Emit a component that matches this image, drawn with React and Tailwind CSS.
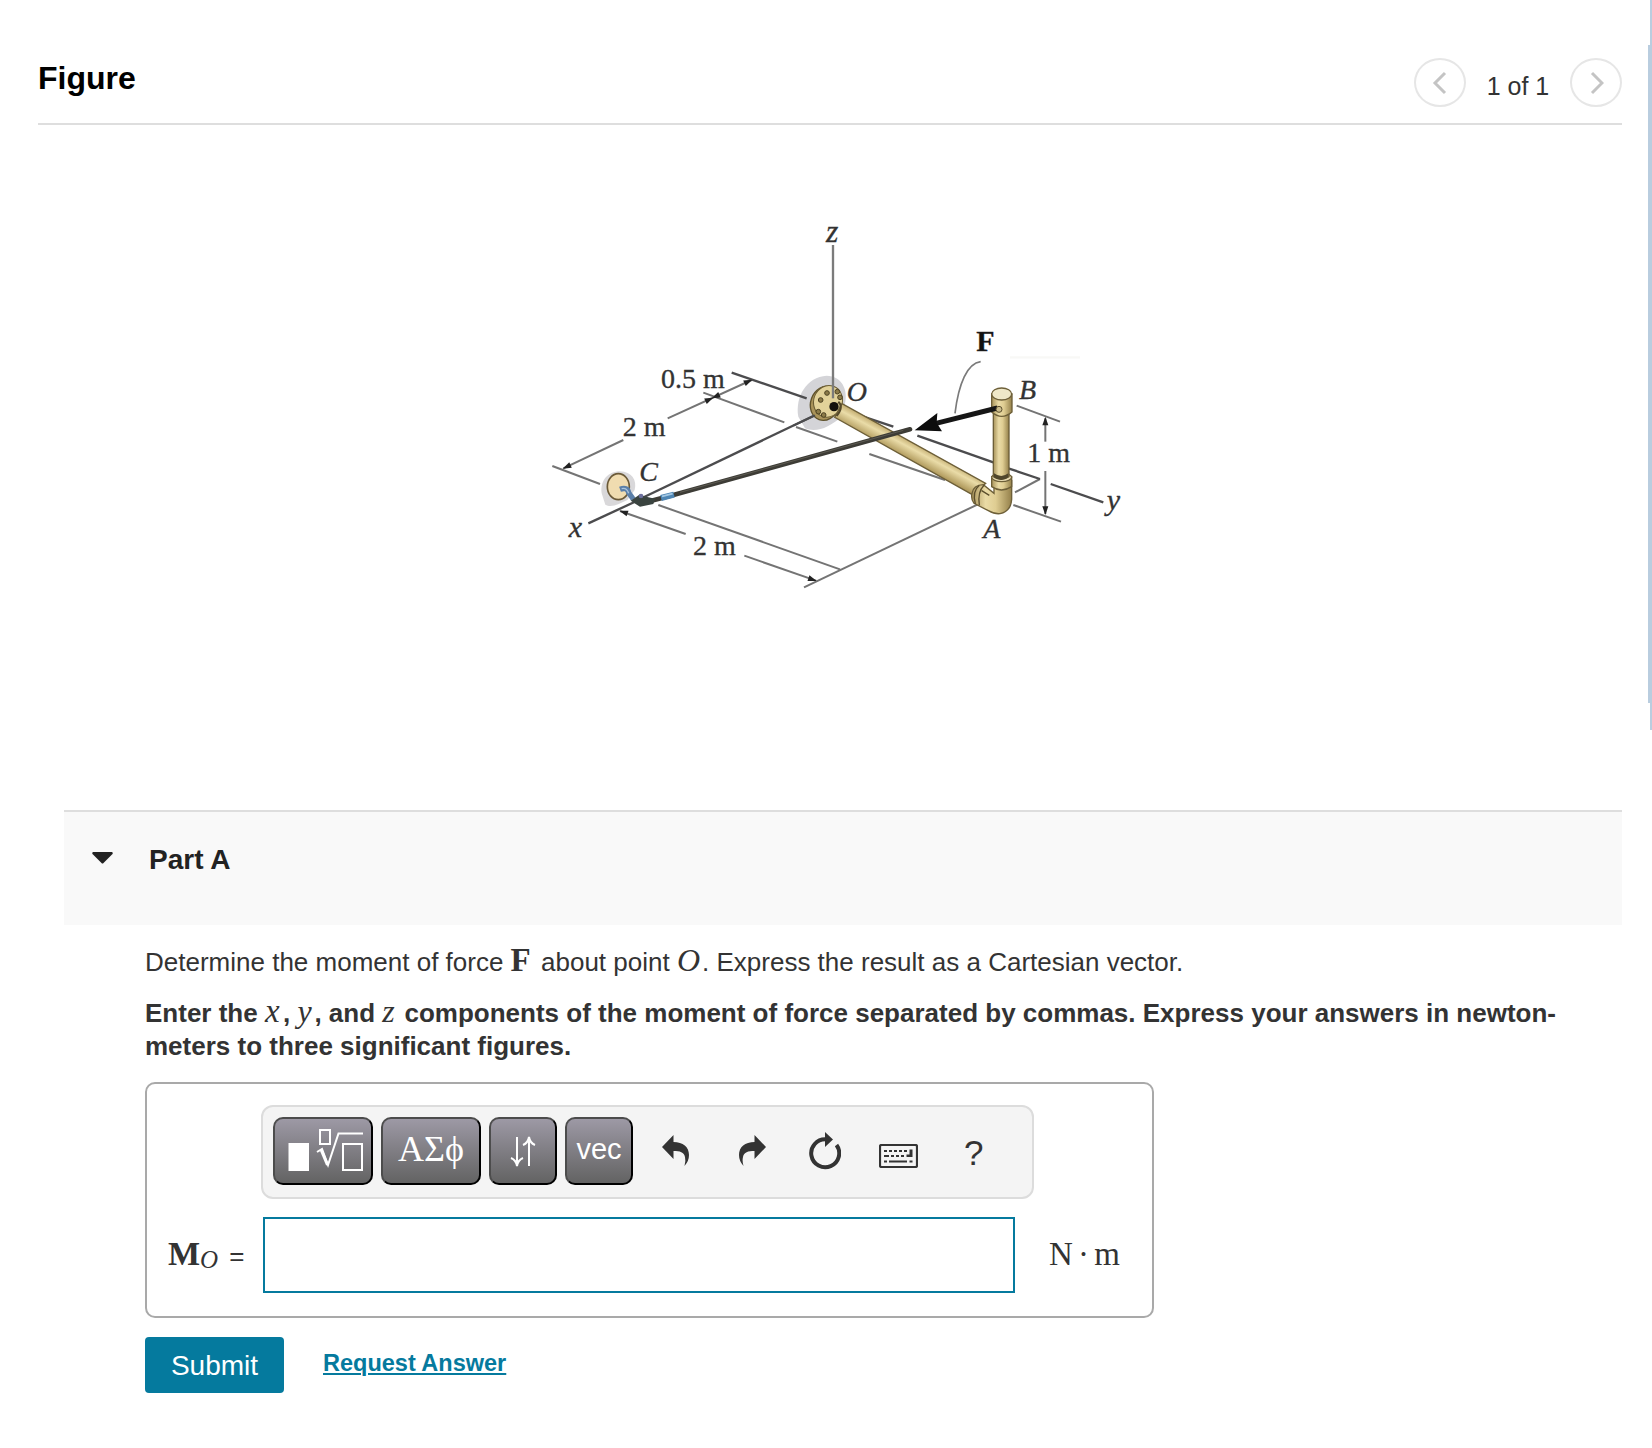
import React, { useState } from 'react';

const serif = "font-['Liberation_Serif',serif]";

const thinLines = [
  [490, 548, 733, 637],
  [768, 651, 892, 695],
  [383, 625, 635, 510],
  [250, 690, 70, 775],
  [37, 768, 180, 822],
  [240, 903, 437, 972],
  [613, 1037, 828, 1112],
  [355, 885, 900, 1078],
  [792, 1132, 1320, 880],
  [988, 732, 1215, 810],
  [1425, 847, 1500, 807],
  [1420, 885, 1563, 935],
  [1430, 587, 1560, 635],
  [1516, 625, 1516, 695],
  [1516, 783, 1516, 912],
];

const axisLines = [
  [575, 488, 800, 565],
  [145, 940, 290, 873],
  [300, 867, 820, 618],
  [970, 620, 1060, 650],
  [1132, 677, 1360, 757],
  [1405, 775, 1500, 807],
  [1532, 822, 1690, 877],
];

// tip x, tip y, direction in degrees
const arrowHeads = [
  [637, 509, -25],
  [520, 563, -25],
  [515, 565, 155],
  [68, 776, 155],
  [238, 902, 199],
  [830, 1113, 19],
  [1516, 620, -90],
  [1516, 915, 90],
];

const Diagram = () => (
  <svg className="w-[600px] h-[400px]" viewBox="0 0 1800 1200">
    <defs>
      <linearGradient id="pipeV" x1="0" x2="1" y1="0" y2="0">
        <stop offset="0" stopColor="#a8935a" />
        <stop offset="0.35" stopColor="#eadba6" />
        <stop offset="0.6" stopColor="#dfcd92" />
        <stop offset="1" stopColor="#94804a" />
      </linearGradient>
      <linearGradient id="pipeH" gradientUnits="userSpaceOnUse" x1="1105" y1="692" x2="1083" y2="733">
        <stop offset="0" stopColor="#c9b479" />
        <stop offset="0.35" stopColor="#eadca8" />
        <stop offset="1" stopColor="#b39d60" />
      </linearGradient>
    </defs>

    <path d="M775 620C765 560 800 500 860 497C905 497 925 540 915 580L905 620C870 650 830 670 795 655Z" fill="#d4d4d8" />
    <path d="M185 850C180 810 205 784 240 784C275 786 292 810 284 840L262 870C240 880 215 895 196 884Z" fill="#d9d8da" />
    <path d="M1410 442H1620" stroke="#f8f8f6" strokeWidth="7" />

    <g stroke="#747474" strokeWidth="6">
      {thinLines.map(([x1, y1, x2, y2], i) => <line key={i} x1={x1} y1={y1} x2={x2} y2={y2} />)}
    </g>
    <g stroke="#4c4c4e" strokeWidth="7">
      {axisLines.map(([x1, y1, x2, y2], i) => <line key={i} x1={x1} y1={y1} x2={x2} y2={y2} />)}
    </g>
    {arrowHeads.map(([x, y, r], i) => (
      <path key={i} d="M0 0L-26 -9V9Z" fill="#222" transform={`translate(${x} ${y}) rotate(${r})`} />
    ))}

    {/* wall flange at O */}
    <ellipse cx="855" cy="580" rx="43" ry="52" transform="rotate(20 855 580)" fill="#a9935a" stroke="#5f522c" strokeWidth="4" />
    <ellipse cx="864" cy="574" rx="43" ry="48" transform="rotate(20 864 574)" fill="#e2d29a" stroke="#6b5d34" strokeWidth="3" />
    {[[842, 570], [861, 549], [892, 545], [835, 605], [851, 615], [900, 562]].map(([x, y]) => (
      <circle key={x} cx={x} cy={y} r="7" fill="#8b7a48" stroke="#4d4222" strokeWidth="3" />
    ))}
    <line x1="760" y1="647" x2="825" y2="616" stroke="#4c4c4e" strokeWidth="6" />

    {/* pipe from O to A */}
    <path d="M906 581L1337 820L1297 854L884 622Z" fill="url(#pipeH)" stroke="#6d5f38" strokeWidth="4" />
    <circle cx="882" cy="590" r="14" fill="#15110c" />
    <path d="M895 575Q912 590 890 618" fill="none" stroke="#54482a" strokeWidth="6" />

    {/* riser and elbow at A */}
    <path d="M1296 850Q1300 825 1330 824L1362 850V812H1415V868Q1412 905 1380 911Q1365 913 1345 902L1302 880Q1292 868 1296 850Z" fill="url(#pipeV)" stroke="#6d5f38" strokeWidth="4" />
    <path d="M1318 826Q1296 844 1306 882M1332 826Q1312 846 1318 886M1325 842L1348 856" fill="none" stroke="#5b4e2c" strokeWidth="4" />
    <path d="M1355 800V830Q1384 850 1415 830V800Z" fill="url(#pipeV)" stroke="#6d5f38" strokeWidth="4" />
    <ellipse cx="1385" cy="802" rx="30" ry="13" fill="#e8dcb4" stroke="#6d5f38" strokeWidth="4" />
    <path d="M1360 610V800Q1383 816 1407 800V610Z" fill="url(#pipeV)" stroke="#6d5f38" strokeWidth="4" />
    <path d="M1362 790Q1384 806 1405 790V802Q1384 818 1362 802Z" fill="#50472c" />
    <path d="M1355 552V606Q1385 632 1416 606V552Z" fill="url(#pipeV)" stroke="#6d5f38" strokeWidth="4" />
    <ellipse cx="1385" cy="552" rx="30" ry="18" fill="#efe8c8" stroke="#6d5f38" strokeWidth="4" />

    {/* cable and force */}
    <path d="M320 876L400 855L1110 658" fill="none" stroke="#3d3c36" strokeWidth="14" strokeLinecap="round" />
    <path d="M420 847L1090 661" stroke="#6c6a5f" strokeWidth="2" />
    <path d="M363 864L402 854" stroke="#4f86b4" strokeWidth="18" />
    <path d="M366 859L398 851" stroke="#a3c8e4" strokeWidth="5" />
    <path d="M1372 594L1185 641" stroke="#161616" strokeWidth="15" />
    <circle cx="1377" cy="598" r="9" fill="#cbbd8d" stroke="#5b4e2c" strokeWidth="3" />
    <path d="M1124 661L1192 609L1190 638L1206 664Z" fill="#0d0d0d" />
    <path d="M1322 455C1282 460 1256 520 1245 610" fill="none" stroke="#7a7a7a" strokeWidth="5" />

    {/* wall plate and hook at C */}
    <ellipse cx="235" cy="830" rx="33" ry="39" fill="#f0dcb0" stroke="#6b5a38" strokeWidth="5" />
    <path d="M240 838Q262 830 266 848L280 868" fill="none" stroke="#5b7fa8" strokeWidth="16" />
    <path d="M245 836Q260 832 266 850" fill="none" stroke="#a9c4dd" strokeWidth="4" />
    <path d="M272 872L298 854L325 862L345 866L340 882L300 890Z" fill="#3a4440" />
    <circle cx="303" cy="858" r="7" fill="#6b6f9c" />

    <line x1="879" y1="105" x2="879" y2="565" stroke="#7b7b7b" strokeWidth="7" />

    <g className={serif} fontSize="84" fill="#333" stroke="#333" strokeWidth="1">
      <text x="363" y="535">0.5 m</text>
      <text x="248" y="677">2 m</text>
      <text x="459" y="1036">2 m</text>
      <text x="1462" y="756">1 m</text>
      <g fontStyle="italic">
        <text x="858" y="95" fontSize="95">z</text>
        <text x="298" y="812">C</text>
        <text x="86" y="980" fontSize="90">x</text>
        <text x="920" y="572">O</text>
        <text x="1437" y="567">B</text>
        <text x="1330" y="984">A</text>
        <text x="1700" y="901" fontSize="90">y</text>
      </g>
      <text x="1309" y="423" fontSize="90" fontWeight="bold" fill="#111">F</text>
    </g>
  </svg>
);

const PageButton = ({ direction }) => (
  <button className="flex h-[49px] w-[52px] items-center justify-center rounded-[50%] border-2 border-[#e6e6e6]">
    <svg className="h-6 w-4" viewBox="0 0 16 24" fill="none" stroke="#c4c4c4" strokeWidth="3">
      <path d={direction === 'prev' ? 'M13 2L3 12L13 22' : 'M4 2L14 12L4 22'} />
    </svg>
  </button>
);

const KeyButton = ({ className, children }) => (
  <button className={`flex h-[68px] shrink-0 items-center justify-center rounded-[10px] border-2 border-t-[#4c4c4c] border-l-[#4c4c4c] border-r-black border-b-black bg-linear-to-b from-[#9d99a5] to-[#636363] text-white ${className}`}>
    {children}
  </button>
);

const Toolbar = () => (
  <div className="ml-[114px] flex h-[94px] w-[773px] gap-2 rounded-xl border-2 border-[#dcdcdc] bg-[#f4f4f4] pl-[10px] pt-[10px]">
    <KeyButton className="w-[100px]">
      <svg className="h-16 w-24" viewBox="0 0 96 64" fill="none" stroke="#fff" strokeWidth="2">
        <rect x="13.5" y="24" width="20.500" height="28" fill="#fff" stroke="none" />
        <rect x="45" y="11" width="10" height="14" />
        <path d="M42 33L47 30L53 46L63.500 14.500H88" />
        <path d="M46 30.500L52.500 46" strokeWidth="3" />
        <rect x="68" y="25" width="19" height="26" />
      </svg>
    </KeyButton>
    <KeyButton className="w-[100px]">
      <span className={`${serif} -mt-1 text-[36px] leading-none`}>ΑΣϕ</span>
    </KeyButton>
    <KeyButton className="w-[68px]">
      <svg className="h-8 w-7" viewBox="0 0 28 32" fill="none" stroke="#fff" strokeWidth="2">
        <path d="M8 2V30M2 23Q7 25 8 31Q9 25 14 23" />
        <path d="M20 31V3M14 10Q19 8 20 2Q21 8 26 10" />
      </svg>
    </KeyButton>
    <KeyButton className="w-[68px]">
      <span className="-mt-1 text-[29px] leading-none">vec</span>
    </KeyButton>
    <div className="ml-[21px] flex h-[68px] items-center text-[#333]">
      <svg className="h-[31px] w-[27px] -mt-px" viewBox="0 0 27 31" fill="currentColor">
        <path d="M0 12L11.500 0V7C21 7 27 12 27 20Q27 26 22.500 31Q24 26 23 22C22 17 18 16 11.500 16V24Z" />
      </svg>
      <svg className="ml-[50px] h-[31px] w-[27px] -mt-px" viewBox="0 0 27 31" fill="currentColor">
        <path d="M27 12L15.500 0V7C6 7 0 12 0 20Q0 26 4.500 31Q3 26 4 22C5 17 9 16 15.500 16V24Z" />
      </svg>
      <svg className="ml-[43px] h-[38px] w-[32px]" viewBox="0 0 32 38">
        <path d="M27.500 13A14 14 0 1 1 17 7.300" fill="none" stroke="currentColor" strokeWidth="4" />
        <path d="M16 0L24 7.500L16 15Z" fill="currentColor" />
      </svg>
      <svg className="ml-[38px] mt-[9px] h-[24px] w-[39px]" viewBox="0 0 39 24" fill="currentColor">
        <rect x="1" y="1" width="37" height="22" rx="1.500" fill="none" stroke="currentColor" strokeWidth="2.200" />
        <path d="M5 6h3v2h-3zM10 6h3v2h-3zM15 6h3v2h-3zM20 6h3v2h-3zM25 6h3v2h-3zM30.500 5.500h3v7.500h-6v-2.500h3zM5 11h5v2h-5zM12 11h3v2h-3zM17 11h3v2h-3zM22 11h3v2h-3zM5 16.500h3v2h-3zM10 16.500h18v2h-18zM30.500 16.500h3v2h-3z" />
      </svg>
      <span className="ml-[46px] mt-0.5 text-[35px] leading-none">?</span>
    </div>
  </div>
);

const App = () => {
  const [answer, setAnswer] = useState('');

  return (
    <div className="flex h-[1448px] w-[1652px] overflow-hidden bg-white font-['Liberation_Sans',Arial,sans-serif] text-[26px] text-[#333]">
      <div className="w-[1648px] pl-[38px] pr-[26px]">
        <header className="flex h-[125px] justify-between border-b-2 border-[#dedede] pt-[58px]">
          <h1 className="text-[32px] font-bold leading-[40px] text-black">Figure</h1>
          <div className="flex">
            <PageButton direction="prev" />
            <span className="w-[104px] pt-[12px] text-center text-[25px] leading-[32px]">1 of 1</span>
            <PageButton direction="next" />
          </div>
        </header>

        <div className="ml-[502px] mt-[85px] h-[400px]">
          <Diagram />
        </div>

        <section className="ml-[26px] mt-[200px]">
          <div className="flex h-[115px] border-t-2 border-[#dedede] bg-[#f9f9f9] pl-7 pt-[31px]">
            <svg className="mt-[9px] h-[12px] w-[21px]" viewBox="0 0 21 12">
              <path d="M1 0H20Q21.500 1 20 2.500L11.500 11Q10.500 12 9.500 11L1 2.500Q-.5 1 1 0Z" fill="#222" />
            </svg>
            <h2 className="ml-[36px] text-[28px] font-bold leading-[34px] text-[#222]">Part A</h2>
          </div>

          <div className="ml-[81px] pt-[19px]">
            <p className="h-[51px] whitespace-nowrap leading-[36px]">
              Determine the moment of force <b className={`${serif} mr-[3px] text-[33px] leading-none`}>F</b> about point <i className={`${serif} mr-[2px] text-[32px] leading-none`}>O</i>. Express the result as a Cartesian vector.
            </p>
            <p className="h-[87px] whitespace-nowrap font-bold leading-[33px]">
              Enter the <i className={`${serif} inline-block w-[18px] text-[33px] font-normal leading-none`}>x</i>, <i className={`${serif} inline-block w-[17px] text-[32px] font-normal leading-none`}>y</i>, and <i className={`${serif} inline-block w-[15px] text-[32px] font-normal leading-none`}>z</i> components of the moment of force separated by commas. Express your answers in newton-<br />
              meters to three significant figures.
            </p>

            <div className="h-[236px] w-[1009px] rounded-[10px] border-2 border-[#a9a9a9] pt-[21px]">
              <Toolbar />
              <div className="mt-[18px] flex h-[76px] items-center">
                <label className="-mt-1 flex w-[116px] items-baseline pl-[21px]">
                  <b className={`${serif} text-[34px]`}>M</b>
                  <i className={`${serif} relative top-[3px] text-[25px]`}>O</i>
                  <span className="ml-[11px] text-[26px]">=</span>
                </label>
                <input
                  type="text"
                  value={answer}
                  onChange={(e) => setAnswer(e.target.value)}
                  className="h-[76px] w-[752px] border-2 border-[#057a9e] px-3 outline-none"
                />
                <span className={`${serif} ml-[34px] text-[33px] [word-spacing:-3px]`}>N · m</span>
              </div>
            </div>

            <div className="mt-[19px] flex h-14 items-center">
              <button className="h-14 w-[139px] rounded bg-[#057a9e] pt-0.5 text-[28px] text-white">Submit</button>
              <a href="#" className="-mt-0.5 ml-[39px] text-[23.5px] font-bold text-[#057a9e] underline decoration-2 underline-offset-2">Request Answer</a>
            </div>
          </div>
        </section>
      </div>

      <div className="flex w-1 flex-col items-end">
        <div className="h-[45px] w-0.5 bg-[#b9cddf]"></div>
        <div className="h-[658px] w-1 bg-[#b9cddf]"></div>
        <div className="h-[27px] w-0.5 bg-[#b9cddf]"></div>
      </div>
    </div>
  );
};

export default App;
